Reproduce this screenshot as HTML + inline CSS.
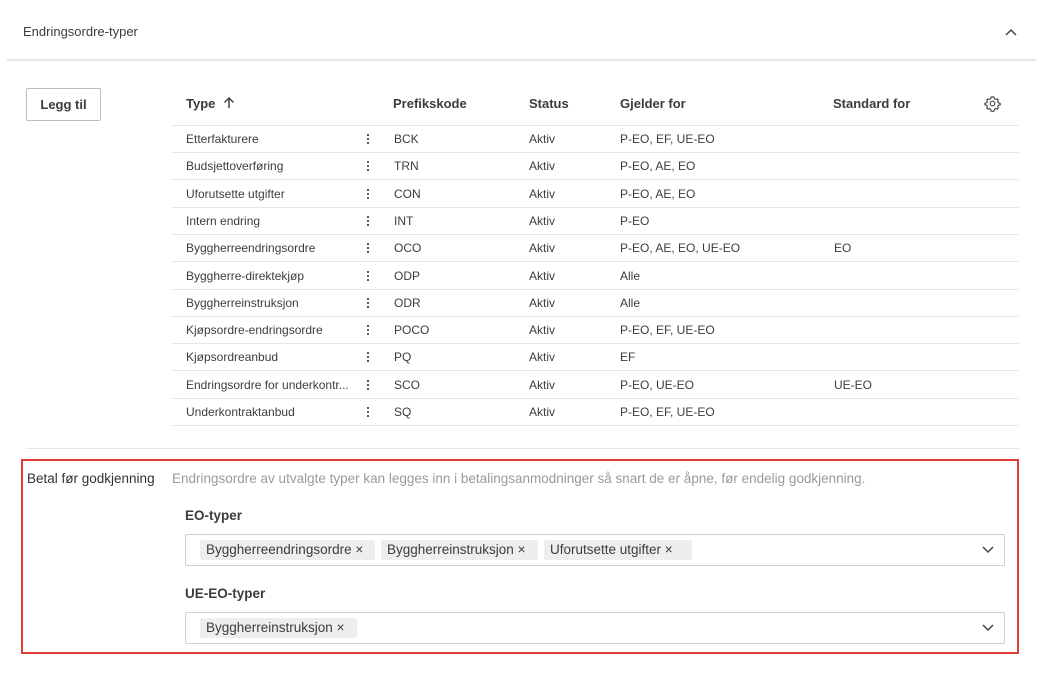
<!DOCTYPE html>
<html><head><meta charset="utf-8"><style>
*{margin:0;padding:0;box-sizing:border-box}
body{width:1044px;height:673px;background:#fff;font-family:"Liberation Sans",sans-serif;color:#3c3c3c;position:relative;overflow:hidden}
.a{position:absolute;white-space:nowrap}
.hl{position:absolute;height:1px;background:#e6e6e6}
.th{font-size:13px;font-weight:bold;color:#3c3c3c}
.td{font-size:12px;color:#3c3c3c}
.keb{position:absolute;width:2px;height:2px;background:#555;box-shadow:0 4px 0 #555,0 8px 0 #555}
.tag{position:absolute;height:20px;background:#eeeeee;border-radius:2px;font-size:13.5px;line-height:20px;padding:0 6px;color:#3c3c3c}
.sel{position:absolute;left:185px;width:820px;height:32px;border:1px solid #cfcfcf;border-radius:2px}
</style></head><body>
<div class="a" style="left:23px;top:24px;font-size:13px">Endringsordre-typer</div>
<svg class="a" style="left:1004px;top:27px" width="14" height="10" viewBox="0 0 14 10"><path d="M2 8 L7 3 L12 8" fill="none" stroke="#444" stroke-width="1.5"/></svg>
<div class="hl" style="left:7px;top:59px;width:1029px;height:2px;background:#e8e8e8"></div>
<div class="a" style="left:26px;top:88px;width:75px;height:33px;border:1px solid #bdbdbd;border-radius:2px;font-size:13px;font-weight:bold;text-align:center;line-height:31px">Legg til</div>
<div class="a th" style="left:186px;top:96px">Type</div>
<svg class="a" style="left:222px;top:96px" width="14" height="14" viewBox="0 0 14 14"><path d="M7 12 V2 M2.5 6.5 L7 2 L11.5 6.5" fill="none" stroke="#444" stroke-width="1.5"/></svg>
<div class="a th" style="left:393px;top:96px">Prefikskode</div>
<div class="a th" style="left:529px;top:96px">Status</div>
<div class="a th" style="left:620px;top:96px">Gjelder for</div>
<div class="a th" style="left:833px;top:96px">Standard for</div>
<svg class="a" style="left:984px;top:95px" width="17" height="17" viewBox="0 0 24 24"><path d="M12 2.5l2 .3.6 2.4 1.7 1 2.4-.7 1.4 1.5-.7 2.4 1 1.7 2.4.6.1 2.1-2.4.6-1 1.7.7 2.4-1.4 1.5-2.4-.7-1.7 1-.6 2.4-2 .3-2-.3-.6-2.4-1.7-1-2.4.7-1.4-1.5.7-2.4-1-1.7-2.4-.6v-2.1l2.4-.6 1-1.7-.7-2.4 1.4-1.5 2.4.7 1.7-1 .6-2.4z" fill="none" stroke="#444" stroke-width="1.6"/><circle cx="12" cy="12" r="3.3" fill="none" stroke="#444" stroke-width="1.6"/></svg>
<div class="hl" style="left:172px;top:125px;width:847px"></div>
<div id="rows"></div>
<div class="hl" style="left:26px;top:448px;width:993px"></div>
<div class="a" style="left:21px;top:459px;width:998px;height:195px;border:2px solid #e03a3a"></div>
<div class="a" style="left:27px;top:471px;font-size:13.5px;color:#333">Betal før godkjenning</div>
<div class="a" style="left:172px;top:471px;font-size:13.5px;color:#9a9a9a">Endringsordre av utvalgte typer kan legges inn i betalingsanmodninger så snart de er åpne, før endelig godkjenning.</div>
<div class="a" style="left:185px;top:508px;font-size:13.5px;font-weight:bold">EO-typer</div>
<div class="sel" style="top:534px"></div>
<div class="tag" style="left:200px;top:540px;width:175px">Byggherreendringsordre ×</div>
<div class="tag" style="left:381px;top:540px;width:157px">Byggherreinstruksjon ×</div>
<div class="tag" style="left:544px;top:540px;width:148px">Uforutsette utgifter ×</div>
<svg class="a" style="left:981px;top:545px" width="14" height="10" viewBox="0 0 14 10"><path d="M2 2 L7 7 L12 2" fill="none" stroke="#444" stroke-width="1.5"/></svg>
<div class="a" style="left:185px;top:586px;font-size:13.5px;font-weight:bold">UE-EO-typer</div>
<div class="sel" style="top:612px"></div>
<div class="tag" style="left:200px;top:618px;width:157px">Byggherreinstruksjon ×</div>
<svg class="a" style="left:981px;top:623px" width="14" height="10" viewBox="0 0 14 10"><path d="M2 2 L7 7 L12 2" fill="none" stroke="#444" stroke-width="1.5"/></svg>
<script>
var d=[["Etterfakturere","BCK","P-EO, EF, UE-EO",""],["Budsjettoverføring","TRN","P-EO, AE, EO",""],["Uforutsette utgifter","CON","P-EO, AE, EO",""],["Intern endring","INT","P-EO",""],["Byggherreendringsordre","OCO","P-EO, AE, EO, UE-EO","EO"],["Byggherre-direktekjøp","ODP","Alle",""],["Byggherreinstruksjon","ODR","Alle",""],["Kjøpsordre-endringsordre","POCO","P-EO, EF, UE-EO",""],["Kjøpsordreanbud","PQ","EF",""],["Endringsordre for underkontr...","SCO","P-EO, UE-EO","UE-EO"],["Underkontraktanbud","SQ","P-EO, EF, UE-EO",""]];
var h="";d.forEach(function(r,i){var y=125+i*27.3;
h+='<div class="a td" style="left:186px;top:'+(y+7)+'px">'+r[0]+'</div><div class="keb" style="left:367px;top:'+(y+9)+'px"></div><div class="a td" style="left:394px;top:'+(y+7)+'px">'+r[1]+'</div><div class="a td" style="left:529px;top:'+(y+7)+'px">Aktiv</div><div class="a td" style="left:620px;top:'+(y+7)+'px">'+r[2]+'</div><div class="a td" style="left:834px;top:'+(y+7)+'px">'+r[3]+'</div><div class="hl" style="left:172px;top:'+(y+27)+'px;width:847px"></div>';});
document.getElementById("rows").innerHTML=h;
</script>
</body></html>
